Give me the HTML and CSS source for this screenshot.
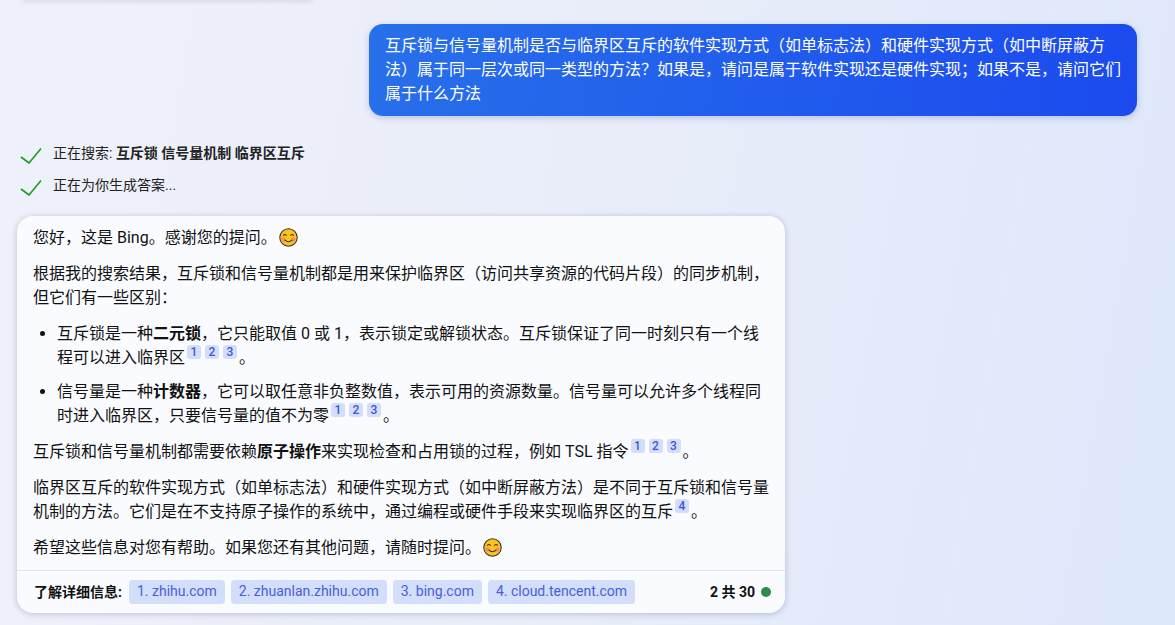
FILE: index.html
```html
<!DOCTYPE html>
<html lang="zh-CN">
<head>
    <meta charset="UTF-8">
    <meta name="viewport" content="width=device-width, initial-scale=1.0">
    <title>Bing Chat</title>
    <link rel="stylesheet" href="styles.css">
</head>
<body>
    <div class="prev-card"></div>

    <div class="user-row">
        <div class="user-bubble">互斥锁与信号量机制是否与临界区互斥的软件实现方式（如单标志法）和硬件实现方式（如中断屏蔽方法）属于同一层次或同一类型的方法？如果是，请问是属于软件实现还是硬件实现；如果不是，请问它们属于什么方法</div>
    </div>

    <div class="status-list">
        <div class="status">
            <svg class="check" viewBox="0 0 22 16"><path d="M1 9 L9 15 L21 0.5" fill="none" stroke="#1aa01a" stroke-width="1.6"/></svg>
            <span>正在搜索: <b>互斥锁 信号量机制 临界区互斥</b></span>
        </div>
        <div class="status">
            <svg class="check" viewBox="0 0 22 16"><path d="M1 9 L9 15 L21 0.5" fill="none" stroke="#1aa01a" stroke-width="1.6"/></svg>
            <span>正在为你生成答案...</span>
        </div>
    </div>

    <div class="answer-card">
        <div class="answer-body">
            <p>您好，这是 Bing。感谢您的提问。<svg class="emoji" viewBox="0 0 20 20"><circle cx="10" cy="10" r="9.2" fill="#fcc21b" stroke="#333" stroke-width="1.1"/><circle cx="4.8" cy="12" r="2.2" fill="#f28a6b"/><circle cx="15.2" cy="12" r="2.2" fill="#f28a6b"/><path d="M4.5 8 Q6.2 5.8 8 8 M12 8 Q13.8 5.8 15.5 8 M6 12.5 Q10 16.5 14 12.5" fill="none" stroke="#333" stroke-width="1.1"/></svg></p>
            <p>根据我的搜索结果，互斥锁和信号量机制都是用来保护临界区（访问共享资源的代码片段）的同步机制，但它们有一些区别：</p>
            <ul>
                <li>互斥锁是一种<b>二元锁</b>，它只能取值 0 或 1，表示锁定或解锁状态。互斥锁保证了同一时刻只有一个线程可以进入临界区<span class="cites"><span class="cite">1</span><span class="cite">2</span><span class="cite">3</span></span>。</li>
                <li>信号量是一种<b>计数器</b>，它可以取任意非负整数值，表示可用的资源数量。信号量可以允许多个线程同时进入临界区，只要信号量的值不为零<span class="cites"><span class="cite">1</span><span class="cite">2</span><span class="cite">3</span></span>。</li>
            </ul>
            <p>互斥锁和信号量机制都需要依赖<b>原子操作</b>来实现检查和占用锁的过程，例如 TSL 指令<span class="cites"><span class="cite">1</span><span class="cite">2</span><span class="cite">3</span></span>。</p>
            <p>临界区互斥的软件实现方式（如单标志法）和硬件实现方式（如中断屏蔽方法）是不同于互斥锁和信号量机制的方法。它们是在不支持原子操作的系统中，通过编程或硬件手段来实现临界区的互斥<span class="cites"><span class="cite">4</span></span>。</p>
            <p>希望这些信息对您有帮助。如果您还有其他问题，请随时提问。<svg class="emoji" viewBox="0 0 20 20"><circle cx="10" cy="10" r="9.2" fill="#fcc21b" stroke="#333" stroke-width="1.1"/><circle cx="4.8" cy="12" r="2.2" fill="#f28a6b"/><circle cx="15.2" cy="12" r="2.2" fill="#f28a6b"/><path d="M4.5 8 Q6.2 5.8 8 8 M12 8 Q13.8 5.8 15.5 8 M6 12.5 Q10 16.5 14 12.5" fill="none" stroke="#333" stroke-width="1.1"/></svg></p>
        </div>
        <div class="answer-footer">
            <span class="learn-label">了解详细信息:</span>
            <a class="source">1. zhihu.com</a>
            <a class="source">2. zhuanlan.zhihu.com</a>
            <a class="source">3. bing.com</a>
            <a class="source">4. cloud.tencent.com</a>
            <span class="turn-count">2 共 30</span>
            <span class="turn-dot"></span>
        </div>
    </div>
</body>
</html>
```
FILE: styles.css
```css
html, body {
    height: 100%;
}
body {
    margin: 0;
    overflow: hidden;
    font-family: Roboto, "Noto Sans CJK SC", sans-serif;
    font-size: 16px;
    line-height: 24px;
    color: #111;
    background: linear-gradient(100deg, #eff1fa 0%, #e9edf9 50%, #dde8fb 100%);
}
.prev-card {
    width: 290px;
    height: 1px;
    margin: -1px 0 0 22px;
    border-radius: 0 0 12px 12px;
    background: #f4f6fc;
    box-shadow: 0 1px 4px rgba(60, 60, 80, 0.45);
}
.user-row {
    display: flex;
    justify-content: flex-end;
    padding: 24px 38px 0 0;
}
.user-bubble {
    box-sizing: border-box;
    width: 768px;
    padding: 10px 16px;
    border-radius: 14px;
    color: #fff;
    background: linear-gradient(100deg, #2870ea 0%, #1b4aef 100%);
    box-shadow: 0 2px 6px rgba(40, 70, 160, 0.25);
}
.status-list {
    display: flex;
    flex-direction: column;
    gap: 10px;
    margin: 26px 0 0 20px;
}
.status {
    display: flex;
    align-items: center;
    gap: 11px;
    height: 22px;
    font-size: 14px;
    line-height: 22px;
    color: #222;
}
.check {
    width: 22px;
    height: 16px;
    margin-top: 5px;
}
.answer-card {
    width: 768px;
    margin: 20px 0 0 17px;
    border-radius: 16px;
    background: #fafbff;
    box-shadow: 0 1px 6px rgba(40, 50, 90, 0.25);
}
.answer-body {
    padding: 10px 16px 10px;
}
.answer-body p {
    margin: 0 0 12px;
}
.answer-body p:last-child {
    margin-bottom: 0;
}
.answer-body ul {
    margin: 0 0 12px;
    padding-left: 24px;
}
.answer-body li {
    margin-bottom: 10px;
}
.answer-body li:last-child {
    margin-bottom: 0;
}
.emoji {
    width: 19px;
    height: 19px;
    margin-left: 2px;
    vertical-align: -4px;
}
.cites {
    display: inline-flex;
    gap: 4px;
    margin: -4px 2px 0;
    vertical-align: 7px;
    line-height: 14px;
}
.cite {
    width: 14px;
    height: 14px;
    border-radius: 3px;
    font-size: 12px;
    font-weight: 500;
    text-align: center;
    color: #3a56e0;
    background: #d3defa;
}
.answer-footer {
    display: flex;
    align-items: center;
    gap: 6px;
    height: 42px;
    padding: 0 14px 0 17px;
    border-top: 1px solid #e2e4ea;
    font-size: 14px;
}
.learn-label {
    margin-right: 1px;
    font-weight: 700;
}
.source {
    height: 24px;
    padding: 0 8px;
    border-radius: 4px;
    font-size: 14px;
    line-height: 23px;
    color: #4a5de0;
    background: #d3defa;
}
.turn-count {
    margin-left: auto;
    font-size: 14px;
    font-weight: 700;
}
.turn-dot {
    width: 10px;
    height: 10px;
    border-radius: 50%;
    background: #2e8b4f;
}
```
